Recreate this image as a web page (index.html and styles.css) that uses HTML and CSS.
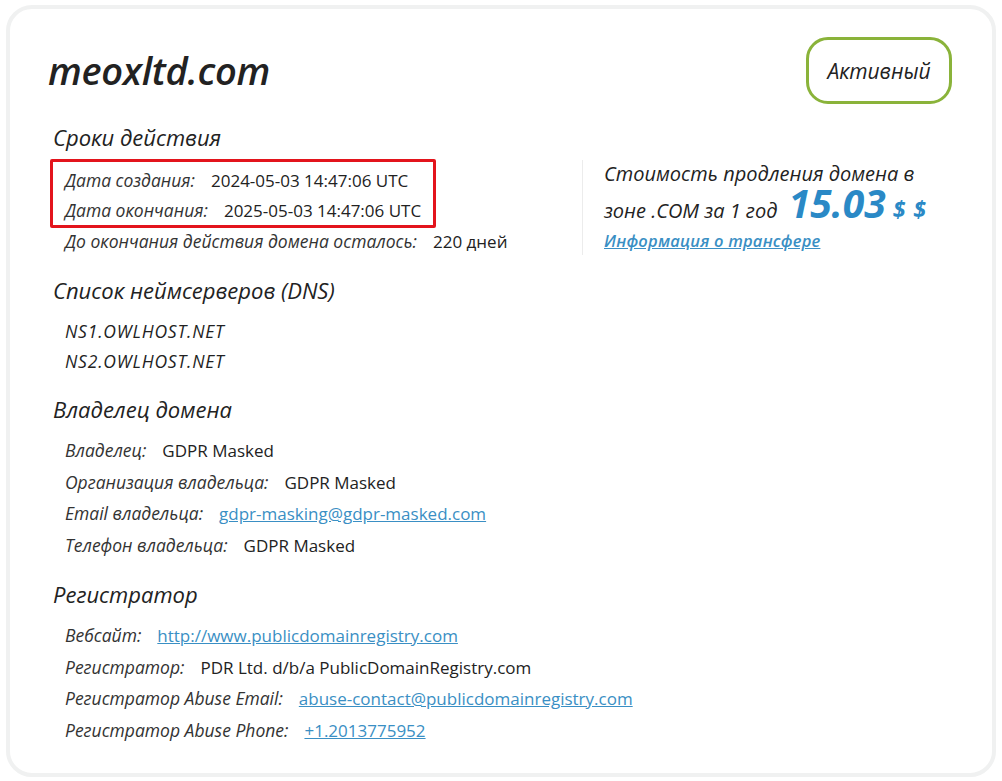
FILE: index.html
```html
<!DOCTYPE html>
<html lang="ru">
<head>
<meta charset="utf-8">
<title>meoxltd.com</title>
<link rel="stylesheet" href="styles.css">
</head>
<body>
<div class="card">
  <div class="header">
    <h1 class="domain">meoxltd.com</h1>
    <div class="badge">Активный</div>
  </div>

  <div class="top">
    <div class="left">
      <h2 class="heading first">Сроки действия</h2>
      <div class="highlight">
        <div class="row"><span class="label">Дата создания:</span><span class="value">2024-05-03 14:47:06 UTC</span></div>
        <div class="row"><span class="label">Дата окончания:</span><span class="value">2025-05-03 14:47:06 UTC</span></div>
      </div>
      <div class="row"><span class="label">До окончания действия домена осталось:</span><span class="value">220 дней</span></div>
    </div>
    <div class="price">
      <div class="price-line">Стоимость продления домена в</div>
      <div class="price-line">зоне .COM за 1 год <span class="amount">15.03</span><span class="cur">$ $</span></div>
      <a class="transfer" href="#">Информация о трансфере</a>
    </div>
  </div>

  <h2 class="heading">Список неймсерверов (DNS)</h2>
  <div class="row ns">NS1.OWLHOST.NET</div>
  <div class="row ns">NS2.OWLHOST.NET</div>

  <h2 class="heading">Владелец домена</h2>
  <div class="row"><span class="label">Владелец:</span><span class="value">GDPR Masked</span></div>
  <div class="row"><span class="label">Организация владельца:</span><span class="value">GDPR Masked</span></div>
  <div class="row"><span class="label">Email владельца:</span><a class="value link" href="#">gdpr-masking@gdpr-masked.com</a></div>
  <div class="row"><span class="label">Телефон владельца:</span><span class="value">GDPR Masked</span></div>

  <h2 class="heading">Регистратор</h2>
  <div class="row"><span class="label">Вебсайт:</span><a class="value link" href="#">http://www.publicdomainregistry.com</a></div>
  <div class="row"><span class="label">Регистратор:</span><span class="value">PDR Ltd. d/b/a PublicDomainRegistry.com</span></div>
  <div class="row"><span class="label">Регистратор Abuse Email:</span><a class="value link" href="#">abuse-contact@publicdomainregistry.com</a></div>
  <div class="row"><span class="label">Регистратор Abuse Phone:</span><a class="value link" href="#">+1.2013775952</a></div>
</div>
</body>
</html>
```

FILE: styles.css
```css
* { box-sizing: border-box; }
html, body { margin: 0; padding: 0; background: #ffffff; }
body {
  font-family: "Open Sans", "Noto Sans", sans-serif;
  color: #222;
  padding: 5px 6px 4px 6px;
}
.card {
  border: 4px solid #f0f1f1;
  border-radius: 26px;
  background: #fff;
  padding: 28px 40px 20px 38px;
  min-height: 772px;
}
.header {
  display: flex;
  justify-content: space-between;
  align-items: flex-start;
}
.domain {
  margin: 8px 0 0 0;
  font-size: 38px;
  font-weight: 600;
  font-style: italic;
  line-height: 50px;
  color: #222;
  letter-spacing: -0.3px;
}
.badge {
  border: 3.5px solid #8ab33a;
  border-radius: 22px;
  width: 146px;
  height: 67px;
  display: flex;
  align-items: center;
  justify-content: center;
  font-style: italic;
  font-size: 21px;
  color: #222;
}
.top {
  display: flex;
  margin-top: 18px;
}
.left { width: 534px; }
.heading {
  margin: 18px 0 11px 5px;
  font-size: 22px;
  font-weight: 400;
  font-style: italic;
  line-height: 30px;
  color: #222;
}
.heading.first { margin-top: 0; margin-bottom: 7px; }
.highlight {
  border: 3px solid #e3141c;
  border-radius: 2px;
  width: 386px;
  margin-left: 2px;
  padding-left: 12px;
  padding-top: 2.5px;
  margin-bottom: -2.5px;
}
.row {
  display: flex;
  align-items: baseline;
  line-height: 31.5px;
  padding-left: 17px;
  white-space: nowrap;
}
.highlight .row { padding-left: 0; line-height: 31px; }
.highlight .row:last-child { line-height: 29.5px; }
.label {
  font-style: italic;
  font-size: 17.5px;
  color: #333;
  margin-right: 16px;
}
.value { color: #222; font-size: 17px; }
.link { color: #3a8fc4; text-decoration: underline; }
.ns {
  font-style: italic;
  color: #222;
  font-size: 17.5px;
  letter-spacing: 0.8px;
  line-height: 30px;
}
.price {
  border-left: 1px solid #ececec;
  margin-top: 38px;
  height: 95px;
  padding-left: 21px;
  font-style: italic;
  color: #222;
}
.price-line {
  font-size: 20px;
  line-height: 31px;
  margin-top: -2px;
}
.amount {
  font-size: 39px;
  font-weight: 700;
  color: #2a89c6;
  font-style: italic;
  margin-left: 6px;
  line-height: 0.8;
}
.cur {
  font-size: 23px;
  font-weight: 700;
  color: #2a89c6;
  margin-left: 7px;
  letter-spacing: 1px;
  line-height: 0.8;
}
.transfer {
  display: block;
  font-size: 16.5px;
  font-weight: 600;
  color: #3a8fc4;
  text-decoration: underline;
  line-height: 28px;
  margin-top: 1px;
  letter-spacing: 0.2px;
}
```
